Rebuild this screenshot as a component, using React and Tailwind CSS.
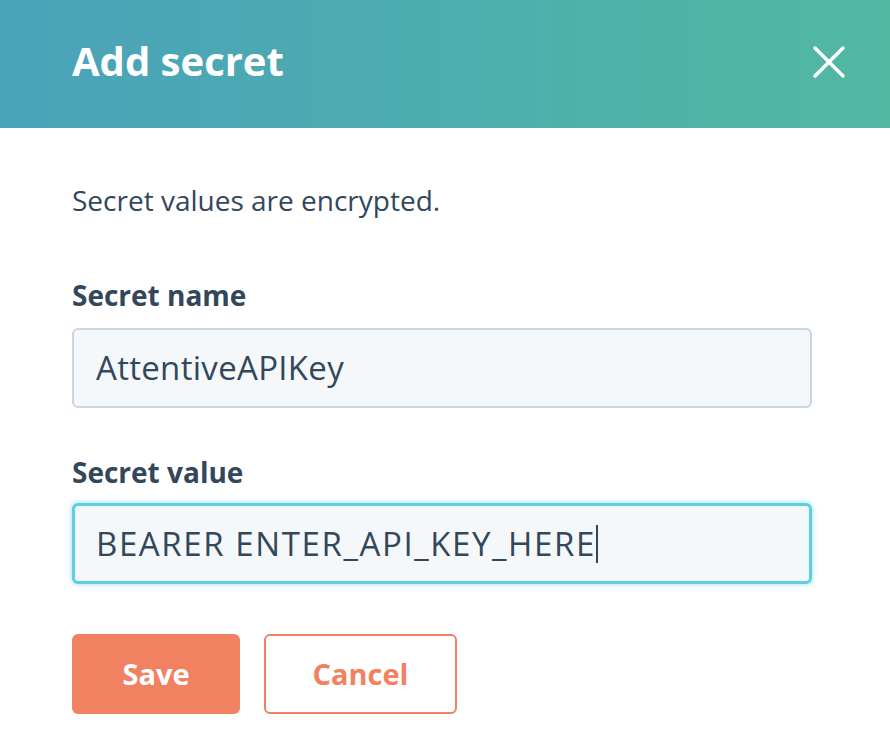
export default function App() {
  return (
    <div className="w-[890px] h-[752px] bg-white font-['Open_Sans',sans-serif] text-[#33475b]">
      <div className="h-[128px] flex items-center justify-between pl-[72px] pr-[44px] bg-gradient-to-r from-[#4aa2b9] to-[#52b8a2]">
        <h1 className="text-[40px] font-bold text-white leading-none -mt-[6px]">Add secret</h1>
        <button className="w-[34px] h-[34px] flex items-center justify-center -mt-[4px]">
          <svg width="34" height="34" viewBox="0 0 34 34" fill="none" stroke="white" strokeWidth="3.5" strokeLinecap="round">
            <path d="M3 3L31 31M31 3L3 31" />
          </svg>
        </button>
      </div>
      <div className="px-[72px] pt-[52px]">
        <p className="text-[28px] leading-[40px]">Secret values are encrypted.</p>
        <div className="mt-[58px] flex flex-col gap-[16px]">
          <label className="text-[28px] font-bold leading-[34px]">Secret name</label>
          <div className="w-[740px] h-[80px] rounded-[6px] border-2 border-[#cbd6e2] bg-[#f5f8fa] flex items-center px-[22px] text-[33px] tracking-[0.3px]">
            AttentiveAPIKey
          </div>
        </div>
        <div className="mt-[47px] flex flex-col gap-[14px]">
          <label className="text-[28px] font-bold leading-[34px]">Secret value</label>
          <div className="w-[740px] h-[81px] rounded-[6px] border-[3px] border-[#5fcfe0] bg-[#f5f8fa] flex items-center px-[21px] text-[33px] tracking-[1.6px] shadow-[0_0_4px_1px_rgba(95,207,224,0.5)]">
            BEARER ENTER_API_KEY_HERE<span className="inline-block w-[2px] h-[38px] bg-[#33475b]"></span>
          </div>
        </div>
        <div className="mt-[50px] flex gap-[24px]">
          <button className="w-[168px] h-[80px] rounded-[6px] bg-[#f08262] text-white text-[29px] font-bold">Save</button>
          <button className="w-[193px] h-[80px] rounded-[6px] border-2 border-[#f08262] text-[#f08262] text-[29px] font-bold">Cancel</button>
        </div>
      </div>
    </div>
  );
}
